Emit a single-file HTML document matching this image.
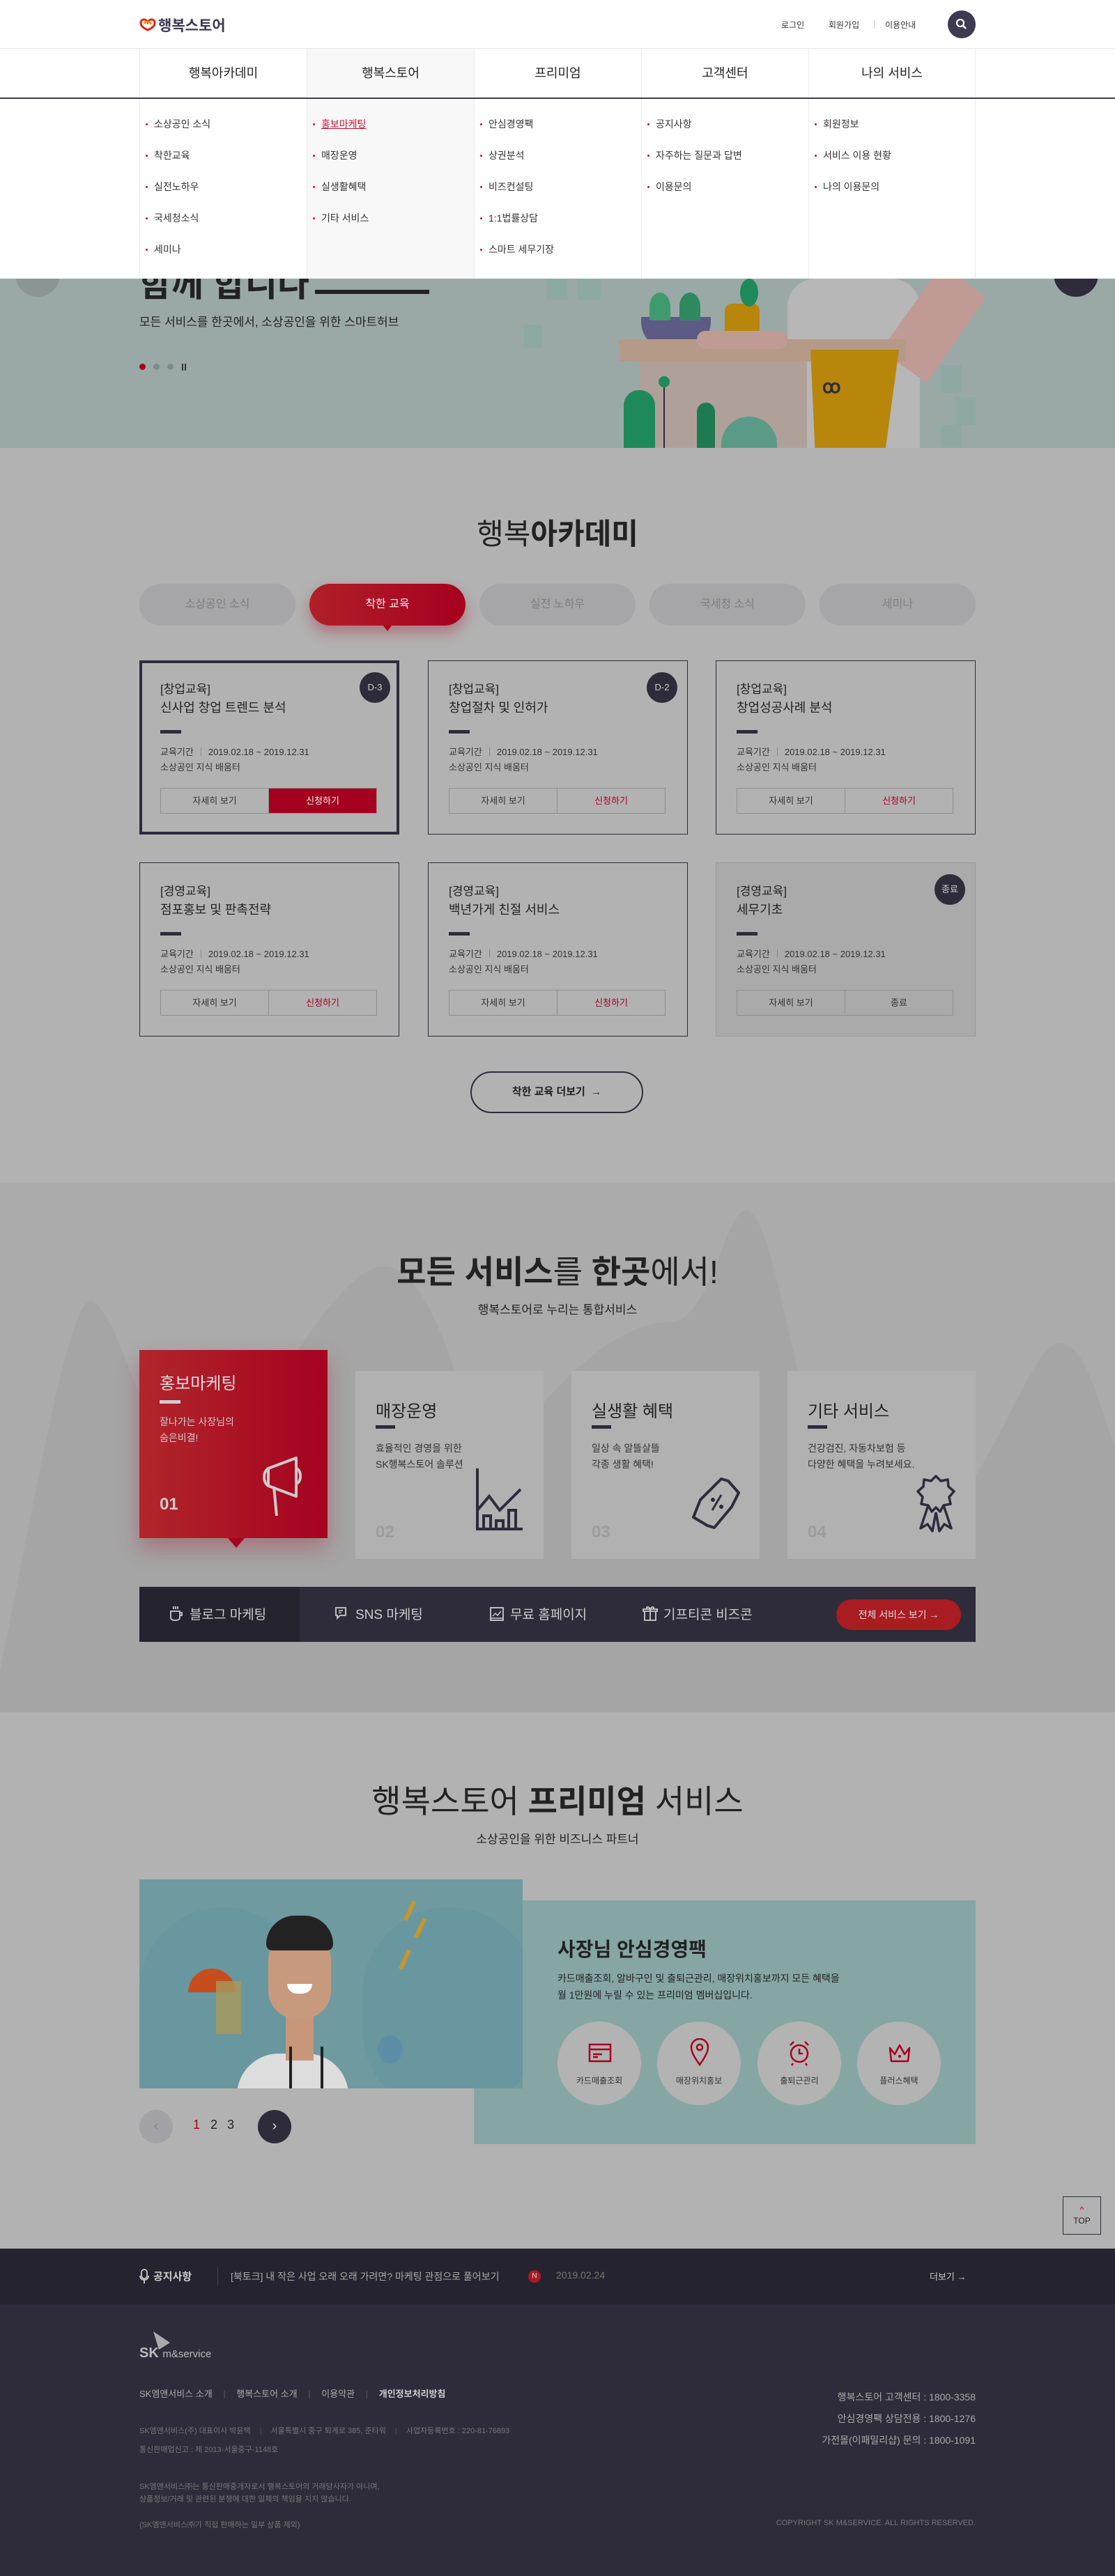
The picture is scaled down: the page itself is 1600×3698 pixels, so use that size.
<!DOCTYPE html>
<html lang="ko"><head><meta charset="utf-8">
<style>
*{margin:0;padding:0;box-sizing:border-box}
body{width:1600px;height:3698px;position:relative;overflow:hidden;background:#b2b2b2;font-family:"Liberation Sans","Noto Sans CJK KR",sans-serif;color:#333}
.a{position:absolute}
.t{position:absolute;white-space:nowrap}
.header{left:0;top:0;width:1600px;height:70px;background:#fff;border-bottom:1px solid #e5e5e5}
.nav{left:0;top:70px;width:1600px;height:72px;background:#fff;border-bottom:2px solid #3d3a52}
.drop{left:0;top:142px;width:1600px;height:258px;background:#fff;z-index:5}
.col{position:absolute;top:0;width:240px;height:100%;border-left:1px solid #ececec}
.navcol{position:absolute;top:0;width:240px;height:70px;border-left:1px solid #ececec;text-align:center;line-height:70px;font-size:18px;color:#222}
.item{position:absolute;left:20px;font-size:14px;color:#333;white-space:nowrap}
.item:before{content:"";position:absolute;left-12px;left:-12px;top:9px;width:3px;height:3px;border-radius:50%;background:#c8102e}
.hero{left:0;top:400px;width:1600px;height:243px;background:#9aa9a6;overflow:hidden}
.tab{position:absolute;top:838px;width:224px;height:60px;border-radius:30px;background:#a6a6a8;color:#7e7e82;font-size:16px;text-align:center;line-height:60px}
.card{position:absolute;width:373px;height:250px;border:1px solid #2e2b3b}
.card .c1{position:absolute;left:29px;top:26px;font-size:17px;color:#222}
.card .c2{position:absolute;left:29px;top:53px;font-size:18px;color:#222}
.card .dash{position:absolute;left:29px;top:99px;width:30px;height:5px;background:#2e2b3b}
.card .c3{position:absolute;left:29px;top:120px;font-size:13px;color:#333}
.card .c3 span{display:inline-block;border-left:1px solid #888;height:12px;margin:0 10px;vertical-align:-1px}
.card .c4{position:absolute;left:29px;top:142px;font-size:13px;color:#333}
.card .btns{position:absolute;left:29px;top:182px;width:311px;height:37px;border:1px solid #8e8e8e;display:flex}
.card .btns div{flex:1;text-align:center;line-height:35px;font-size:13px;color:#333}
.card .btns div+div{border-left:1px solid #8e8e8e;color:#a6001f}
.badge{position:absolute;right:14px;top:16px;width:44px;height:44px;border-radius:50%;background:#2e2b3b;color:#ccc;font-size:13px;text-align:center;line-height:44px}
.svc{position:absolute;top:1968px;width:270px;height:270px;background:#b1b1b1}
.svc .h{position:absolute;left:29px;top:38px;font-size:24px;color:#222}
.svc .d{position:absolute;left:29px;top:78px;width:28px;height:5px;background:#2e2b3b}
.svc .p{position:absolute;left:29px;top:100px;font-size:14px;line-height:23px;color:#333}
.svc .n{position:absolute;left:29px;top:218px;font-size:24px;font-weight:bold;color:#9c9c9c}
.circ{position:absolute;top:2902px;width:120px;height:120px;border-radius:50%;background:#b3b3b3;text-align:center}
.circ span{position:absolute;left:0;width:100%;top:76px;font-size:12px;color:#333}
.circ svg{position:absolute;left:44px;top:30px}
.bi{position:absolute;top:2303px;font-size:19px;color:#ccc;white-space:nowrap}
.bi svg{vertical-align:-4px;margin-right:8px}
</style></head><body>

<div class="a header">
  <svg class="a" style="left:200px;top:25px" width="24" height="20" viewBox="0 0 24 20"><path d="M12 7 C9 1 2 2 2 8 C2 13 7 16 12 18 C17 16 22 13 22 8 C22 2 15 1 12 7Z" fill="none" stroke="#e2231a" stroke-width="3"/><path d="M7 9 C9 5 15 5 17 10" fill="none" stroke="#f39800" stroke-width="3"/></svg>
  <div class="t" style="left:227px;top:21px;font-size:21px;font-weight:bold;color:#3d3a52">행복스토어</div>
  <div class="t" style="left:1121px;top:27px;font-size:12px;color:#333">로그인</div>
  <div class="t" style="left:1189px;top:27px;font-size:12px;color:#333">회원가입</div>
  <div class="a" style="left:1254px;top:29px;width:1px;height:12px;background:#ccc"></div>
  <div class="t" style="left:1270px;top:27px;font-size:12px;color:#333">이용안내</div>
  <div class="a" style="left:1360px;top:15px;width:40px;height:40px;border-radius:50%;background:#3d3a52"></div>
  <svg class="a" style="left:1370px;top:25px" width="20" height="20" viewBox="0 0 20 20"><circle cx="8" cy="8" r="5" fill="none" stroke="#fff" stroke-width="2.2"/><path d="M12 12 L16 16" stroke="#fff" stroke-width="2.5"/></svg>
</div>
<div class="a nav">
  <div class="navcol" style="left:200px">행복아카데미</div>
  <div class="navcol" style="left:440px;background:#f8f8f8">행복스토어</div>
  <div class="navcol" style="left:680px">프리미엄</div>
  <div class="navcol" style="left:920px">고객센터</div>
  <div class="navcol" style="left:1160px;border-right:1px solid #ececec">나의 서비스</div>
</div>

<div class="a hero">
  <div class="a" style="left:22px;top:-30px;width:64px;height:56px;border-radius:0 0 32px 32px;background:#8b9593"></div>
  <div class="a" style="left:1512px;top:-30px;width:64px;height:56px;border-radius:0 0 32px 32px;background:#2e2b3b"></div>
  <div class="t" style="left:200px;top:-32px;font-size:50px;font-weight:bold;color:#222">함께 합니다</div>
  <div class="a" style="left:452px;top:16px;width:164px;height:6px;background:#222"></div>
  <div class="t" style="left:200px;top:48px;font-size:17px;color:#222">모든 서비스를 한곳에서, 소상공인을 위한 스마트허브</div>
  <div class="a" style="left:200px;top:122px;width:9px;height:9px;border-radius:50%;background:#a6001f"></div>
  <div class="a" style="left:220px;top:122px;width:9px;height:9px;border-radius:50%;background:#7f8a88"></div>
  <div class="a" style="left:240px;top:122px;width:9px;height:9px;border-radius:50%;background:#7f8a88"></div>
  <div class="a" style="left:261px;top:122px;width:2px;height:10px;background:#333"></div>
  <div class="a" style="left:265px;top:122px;width:2px;height:10px;background:#333"></div>
  <div class="a" style="left:784px;top:0;width:30px;height:30px;background:#8ea9a4"></div>
  <div class="a" style="left:828px;top:0;width:34px;height:30px;background:#8ea9a4"></div>
  <div class="a" style="left:752px;top:66px;width:26px;height:34px;background:#8ea9a4"></div>
  <div class="a" style="left:1350px;top:124px;width:30px;height:40px;background:#8ea9a4"></div>
  <div class="a" style="left:1370px;top:170px;width:30px;height:40px;background:#8ea9a4"></div>
  <div class="a" style="left:1350px;top:210px;width:30px;height:33px;background:#8ea9a4"></div>
  <div class="a" style="left:1130px;top:0;width:190px;height:243px;background:#b7b7b7;border-radius:40px 40px 0 0"></div>
  <div class="a" style="left:1300px;top:-10px;width:80px;height:150px;background:#c09a94;transform:rotate(35deg)"></div>
  <div class="a" style="left:920px;top:55px;width:100px;height:47px;background:#5d5a85;border-radius:0 0 40px 40px"></div>
  <div class="a" style="left:932px;top:20px;width:30px;height:40px;background:#3f9b6e;border-radius:50% 50% 0 0"></div>
  <div class="a" style="left:975px;top:20px;width:30px;height:40px;background:#2e8a5e;border-radius:50% 50% 0 0"></div>
  <div class="a" style="left:1040px;top:36px;width:50px;height:60px;background:#b8860b;border-radius:10px 10px 20px 20px"></div>
  <div class="a" style="left:1062px;top:0;width:26px;height:40px;background:#1e8a5a;border-radius:50%"></div>
  <div class="a" style="left:888px;top:87px;width:412px;height:32px;background:#b59a88"></div>
  <div class="a" style="left:918px;top:119px;width:240px;height:124px;background:#b0a09a"></div>
  <div class="a" style="left:1000px;top:75px;width:130px;height:26px;background:#c09a94;border-radius:12px"></div>
  <div class="a" style="left:1163px;top:102px;width:127px;height:141px;background:#b8860b;clip-path:polygon(0 0,100% 0,85% 100%,5% 100%)"></div>
  <div class="t" style="left:1180px;top:140px;font-size:26px;font-weight:bold;color:#2e2b3b">ꝏ</div>
  <div class="a" style="left:895px;top:160px;width:45px;height:83px;background:#1e8a5a;border-radius:22px 22px 0 0"></div>
  <div class="a" style="left:945px;top:140px;width:16px;height:16px;background:#1e8a5a;border-radius:50%"></div>
  <div class="a" style="left:952px;top:156px;width:2px;height:87px;background:#2e2b3b"></div>
  <div class="a" style="left:1000px;top:178px;width:26px;height:65px;background:#1e7a50;border-radius:13px 13px 0 0"></div>
  <div class="a" style="left:1035px;top:198px;width:80px;height:45px;background:#5a9a86;border-radius:40px 40px 0 0"></div>
</div>

<div class="a drop">
  <div class="col" style="left:200px">
    <div class="item" style="top:26px">소상공인 소식</div>
    <div class="item" style="top:71px">착한교육</div>
    <div class="item" style="top:116px">실전노하우</div>
    <div class="item" style="top:161px">국세청소식</div>
    <div class="item" style="top:206px">세미나</div>
  </div>
  <div class="col" style="left:440px;background:#f8f8f8">
    <div class="item" style="top:26px;color:#c8102e;text-decoration:underline">홍보마케팅</div>
    <div class="item" style="top:71px">매장운영</div>
    <div class="item" style="top:116px">실생활혜택</div>
    <div class="item" style="top:161px">기타 서비스</div>
  </div>
  <div class="col" style="left:680px">
    <div class="item" style="top:26px">안심경영팩</div>
    <div class="item" style="top:71px">상권분석</div>
    <div class="item" style="top:116px">비즈컨설팅</div>
    <div class="item" style="top:161px">1:1법률상담</div>
    <div class="item" style="top:206px">스마트 세무기장</div>
  </div>
  <div class="col" style="left:920px">
    <div class="item" style="top:26px">공지사항</div>
    <div class="item" style="top:71px">자주하는 질문과 답변</div>
    <div class="item" style="top:116px">이용문의</div>
  </div>
  <div class="col" style="left:1160px;border-right:1px solid #ececec">
    <div class="item" style="top:26px">회원정보</div>
    <div class="item" style="top:71px">서비스 이용 현황</div>
    <div class="item" style="top:116px">나의 이용문의</div>
  </div>
</div>

<div class="a" style="left:0;top:643px;width:1600px;height:1055px;background:#b2b2b2"></div>
<div class="t" style="left:0;width:1600px;text-align:center;top:733px;font-size:42px;color:#222">행복<b>아카데미</b></div>
<div class="tab" style="left:200px">소상공인 소식</div>
<div class="tab" style="left:444px;background:linear-gradient(90deg,#b02028,#a6001f);color:#eee;box-shadow:0 10px 20px rgba(166,0,31,.35)">착한 교육</div>
<div class="a" style="left:550px;top:898px;width:0;height:0;border-left:6px solid transparent;border-right:6px solid transparent;border-top:8px solid #a6001f"></div>
<div class="tab" style="left:688px">실전 노하우</div>
<div class="tab" style="left:932px">국세청 소식</div>
<div class="tab" style="left:1176px">세미나</div>

<div class="card" style="left:200px;top:948px;border:4px solid #2e2b3b">
  <div style="position:absolute;left:-3px;top:-3px;width:373px;height:250px">
  <div class="c1">[창업교육]</div><div class="c2">신사업 창업 트렌드 분석</div><div class="dash"></div>
  <div class="c3">교육기간<span></span>2019.02.18 ~ 2019.12.31</div><div class="c4">소상공인 지식 배움터</div>
  <div class="btns"><div>자세히 보기</div><div style="background:#a6001f;color:#eee">신청하기</div></div>
  <div class="badge">D-3</div></div>
</div>
<div class="card" style="left:614px;top:948px">
  <div class="c1">[창업교육]</div><div class="c2">창업절차 및 인허가</div><div class="dash"></div>
  <div class="c3">교육기간<span></span>2019.02.18 ~ 2019.12.31</div><div class="c4">소상공인 지식 배움터</div>
  <div class="btns"><div>자세히 보기</div><div>신청하기</div></div>
  <div class="badge">D-2</div>
</div>
<div class="card" style="left:1027px;top:948px">
  <div class="c1">[창업교육]</div><div class="c2">창업성공사례 분석</div><div class="dash"></div>
  <div class="c3">교육기간<span></span>2019.02.18 ~ 2019.12.31</div><div class="c4">소상공인 지식 배움터</div>
  <div class="btns"><div>자세히 보기</div><div>신청하기</div></div>
</div>
<div class="card" style="left:200px;top:1238px">
  <div class="c1">[경영교육]</div><div class="c2">점포홍보 및 판촉전략</div><div class="dash"></div>
  <div class="c3">교육기간<span></span>2019.02.18 ~ 2019.12.31</div><div class="c4">소상공인 지식 배움터</div>
  <div class="btns"><div>자세히 보기</div><div>신청하기</div></div>
</div>
<div class="card" style="left:614px;top:1238px">
  <div class="c1">[경영교육]</div><div class="c2">백년가게 친절 서비스</div><div class="dash"></div>
  <div class="c3">교육기간<span></span>2019.02.18 ~ 2019.12.31</div><div class="c4">소상공인 지식 배움터</div>
  <div class="btns"><div>자세히 보기</div><div>신청하기</div></div>
</div>
<div class="card" style="left:1027px;top:1238px;background:#aaaaaa;border-color:#999">
  <div class="c1">[경영교육]</div><div class="c2">세무기초</div><div class="dash"></div>
  <div class="c3">교육기간<span></span>2019.02.18 ~ 2019.12.31</div><div class="c4">소상공인 지식 배움터</div>
  <div class="btns"><div>자세히 보기</div><div style="color:#333">종료</div></div>
  <div class="badge">종료</div>
</div>
<div class="a" style="left:675px;top:1538px;width:248px;height:60px;border:2px solid #2e2b3b;border-radius:30px;text-align:center;line-height:56px;font-size:15px;font-weight:bold;color:#222">착한 교육 더보기 &nbsp;→</div>

<div class="a" style="left:0;top:1698px;width:1600px;height:760px;background:#ababab;overflow:hidden">
  <svg width="1600" height="760" style="position:absolute;left:0;top:0"><path d="M0 700 C60 400 100 170 130 170 C170 170 230 450 300 480 C360 350 480 120 550 120 C620 120 660 300 700 420 C780 300 880 200 960 200 C1020 200 1040 40 1070 40 C1110 40 1140 300 1180 400 C1240 450 1300 520 1350 480 C1420 430 1480 230 1520 230 C1560 230 1580 330 1600 380 L1600 760 L0 760Z" fill="#a5a5a5"/></svg>
</div>
<div class="t" style="left:0;width:1600px;text-align:center;top:1790px;font-size:46px;color:#222"><b>모든 서비스</b>를 <b>한곳</b>에서!</div>
<div class="t" style="left:0;width:1600px;text-align:center;top:1866px;font-size:17px;color:#222">행복스토어로 누리는 통합서비스</div>

<div class="a" style="left:200px;top:1938px;width:270px;height:270px;background:linear-gradient(90deg,#b0262b,#a6021f);box-shadow:0 15px 30px rgba(166,0,31,.3)">
  <div class="t" style="left:29px;top:28px;font-size:24px;color:#ddd">홍보마케팅</div>
  <div class="a" style="left:29px;top:72px;width:30px;height:5px;background:#ccc"></div>
  <div class="t" style="left:29px;top:92px;font-size:14px;line-height:23px;color:#ccc">잘나가는 사장님의<br>숨은비결!</div>
  <div class="t" style="left:29px;top:208px;font-size:24px;font-weight:bold;color:#ccc">01</div>
  <svg class="a" style="left:175px;top:150px" width="70" height="90" viewBox="0 0 70 90"><path d="M10 20 L50 5 L50 60 L10 45 Z M10 20 C2 25 2 40 10 45 M50 20 C58 22 58 40 50 42 M18 46 L22 88" fill="none" stroke="#ccc" stroke-width="4" stroke-linejoin="round"/></svg>
</div>
<div class="a" style="left:327px;top:2208px;width:0;height:0;border-left:12px solid transparent;border-right:12px solid transparent;border-top:14px solid #a6021f"></div>
<div class="svc" style="left:510px"><div class="h">매장운영</div><div class="d"></div><div class="p">효율적인 경영을 위한<br>SK행복스토어 솔루션</div><div class="n">02</div>
  <svg class="a" style="left:172px;top:140px" width="70" height="90" viewBox="0 0 70 90"><path d="M3 0 V87 H68 M3 60 L20 40 L35 60 L65 30 M12 87 V68 H22 V87 M30 87 V75 H40 V87 M48 87 V60 H58 V87" fill="none" stroke="#2e2b3b" stroke-width="4"/></svg></div>
<div class="svc" style="left:820px"><div class="h">실생활 혜택</div><div class="d"></div><div class="p">일상 속 알뜰살뜰<br>각종 생활 혜택!</div><div class="n">03</div>
  <svg class="a" style="left:170px;top:150px" width="75" height="80" viewBox="0 0 75 80"><path d="M45 5 L55 8 L70 25 L60 45 L35 75 L25 72 L5 60 L15 35 Z" fill="none" stroke="#2e2b3b" stroke-width="4" stroke-linejoin="round"/><path d="M32 50 L45 28" stroke="#2e2b3b" stroke-width="3"/><circle cx="33" cy="35" r="3" fill="#2e2b3b"/><circle cx="45" cy="45" r="3" fill="#2e2b3b"/></svg></div>
<div class="svc" style="left:1130px"><div class="h">기타 서비스</div><div class="d"></div><div class="p">건강검진, 자동차보험 등<br>다양한 혜택을 누려보세요.</div><div class="n">04</div>
  <svg class="a" style="left:183px;top:148px" width="60" height="85" viewBox="0 0 60 85"><path d="M30 3 L37 10 L47 8 L48 18 L56 25 L49 33 L51 43 L41 45 L36 54 L30 48 L24 54 L19 45 L9 43 L11 33 L4 25 L12 18 L13 8 L23 10 Z M19 45 L8 78 L18 72 L25 82 L30 55 M41 45 L52 78 L42 72 L35 82 L30 55" fill="none" stroke="#2e2b3b" stroke-width="3.5" stroke-linejoin="round"/></svg></div>

<div class="a" style="left:200px;top:2278px;width:1200px;height:79px;background:#2e2b3b"></div>
<div class="a" style="left:200px;top:2278px;width:230px;height:79px;background:#25232f"></div>
<div class="bi" style="left:242px"><svg width="22" height="24" viewBox="0 0 22 24"><path d="M3 9 H16 V18 C16 21 13 22 9.5 22 C6 22 3 21 3 18 Z M16 11 H19 V15 H16 M7 2 V6 M10 2 V6 M13 2 V6" fill="none" stroke="#ccc" stroke-width="1.8"/></svg>블로그 마케팅</div>
<div class="bi" style="left:478px"><svg width="24" height="24" viewBox="0 0 24 24"><path d="M4 4 H18 V15 H10 L6 19 V15 H4 Z" fill="none" stroke="#ccc" stroke-width="1.8"/><path d="M8 8 H14 M8 11 H12" stroke="#ccc" stroke-width="1.5"/></svg>SNS 마케팅</div>
<div class="bi" style="left:702px"><svg width="22" height="22" viewBox="0 0 22 22"><rect x="2" y="2" width="18" height="18" fill="none" stroke="#ccc" stroke-width="1.8"/><path d="M5 14 L9 10 L12 13 L17 7 M2 17 H20" fill="none" stroke="#ccc" stroke-width="1.5"/></svg>무료 홈페이지</div>
<div class="bi" style="left:922px"><svg width="22" height="24" viewBox="0 0 22 24"><path d="M3 9 H19 V22 H3 Z M1 6 H21 V9 H1 Z M11 6 V22 M11 6 C8 1 4 3 7 6 M11 6 C14 1 18 3 15 6" fill="none" stroke="#ccc" stroke-width="1.8"/></svg>기프티콘 비즈콘</div>
<div class="a" style="left:1200px;top:2296px;width:179px;height:44px;border-radius:22px;background:#a81c22;color:#ddd;font-size:14px;text-align:center;line-height:44px">전체 서비스 보기 →</div>

<div class="t" style="left:0;width:1600px;text-align:center;top:2550px;font-size:46px;color:#222">행복스토어 <b>프리미엄</b> 서비스</div>
<div class="t" style="left:0;width:1600px;text-align:center;top:2626px;font-size:17px;color:#222">소상공인을 위한 비즈니스 파트너</div>
<div class="a" style="left:680px;top:2728px;width:720px;height:350px;background:#86a6a3"></div>
<div class="a" style="left:200px;top:2698px;width:550px;height:300px;background:#6f9a9f;overflow:hidden">
  <div class="a" style="left:0;top:40px;width:240px;height:260px;background:#6997a0;border-radius:120px 120px 0 0"></div>
  <div class="a" style="left:320px;top:40px;width:250px;height:300px;background:#6997a0;border-radius:125px"></div>
  <div class="a" style="left:70px;top:128px;width:68px;height:34px;background:#c84d1e;border-radius:34px 34px 0 0"></div>
  <div class="a" style="left:110px;top:146px;width:36px;height:76px;background:#a89a5a;opacity:.8"></div>
  <div class="a" style="left:140px;top:250px;width:160px;height:60px;background:#ddd;border-radius:60px 60px 0 0"></div>
  <div class="a" style="left:210px;top:190px;width:40px;height:70px;background:#c8977a"></div>
  <div class="a" style="left:185px;top:70px;width:90px;height:130px;background:#c79a7e;border-radius:45px 45px 40px 40px"></div>
  <div class="a" style="left:182px;top:52px;width:96px;height:50px;background:#222;border-radius:48px 48px 10px 10px"></div>
  <div class="a" style="left:212px;top:150px;width:36px;height:14px;background:#fff;border-radius:0 0 18px 18px"></div>
  <div class="a" style="left:215px;top:240px;width:4px;height:60px;background:#222"></div>
  <div class="a" style="left:260px;top:240px;width:4px;height:60px;background:#222"></div>
  <div class="a" style="left:342px;top:224px;width:36px;height:40px;background:#5d8ea8;border-radius:50%"></div>
  <div class="a" style="left:385px;top:30px;width:6px;height:30px;background:#c8962a;transform:rotate(25deg)"></div>
  <div class="a" style="left:400px;top:55px;width:6px;height:30px;background:#c8962a;transform:rotate(25deg)"></div>
  <div class="a" style="left:378px;top:100px;width:6px;height:30px;background:#c8962a;transform:rotate(25deg)"></div>
</div>
<div class="t" style="left:800px;top:2777px;font-size:28px;font-weight:bold;color:#222">사장님 안심경영팩</div>
<div class="t" style="left:800px;top:2828px;font-size:14px;line-height:24px;color:#222">카드매출조회, 알바구인 및 출퇴근관리, 매장위치홍보까지 모든 혜택을<br>월 1만원에 누릴 수 있는 프리미엄 멤버십입니다.</div>
<div class="circ" style="left:800px"><svg width="34" height="30" viewBox="0 0 34 30"><rect x="2" y="3" width="30" height="24" fill="none" stroke="#a6001f" stroke-width="2.5"/><path d="M2 10 H32 M7 17 H20 M7 21 H14" stroke="#a6001f" stroke-width="2.5"/></svg><span>카드매출조회</span></div>
<div class="circ" style="left:943px"><svg width="30" height="40" viewBox="0 0 30 40" style="left:46px;top:24px"><path d="M15 38 C5 24 3 18 3 13 A12 12 0 0 1 27 13 C27 18 25 24 15 38Z" fill="none" stroke="#a6001f" stroke-width="2.5"/><circle cx="15" cy="13" r="4" fill="none" stroke="#a6001f" stroke-width="2.5"/></svg><span>매장위치홍보</span></div>
<div class="circ" style="left:1087px"><svg width="34" height="38" viewBox="0 0 34 38" style="left:43px;top:26px"><circle cx="17" cy="20" r="12" fill="none" stroke="#a6001f" stroke-width="2.5"/><path d="M17 13 V20 H22 M4 8 L9 3 M30 8 L25 3 M8 34 L6 37 M26 34 L28 37" stroke="#a6001f" stroke-width="2.5" fill="none"/></svg><span>출퇴근관리</span></div>
<div class="circ" style="left:1230px"><svg width="34" height="30" viewBox="0 0 34 30"><path d="M3 8 L10 17 L17 4 L24 17 L31 8 L29 27 H5 Z" fill="none" stroke="#a6001f" stroke-width="2.5" stroke-linejoin="round"/><circle cx="17" cy="20" r="2" fill="#a6001f"/></svg><span>플러스혜택</span></div>
<div class="a" style="left:200px;top:3029px;width:48px;height:48px;border-radius:50%;background:#a3a3a7;color:#888;text-align:center;line-height:46px;font-size:20px">‹</div>
<div class="t" style="left:277px;top:3040px;font-size:18px;color:#a6001f">1</div>
<div class="t" style="left:302px;top:3040px;font-size:18px;color:#222">2</div>
<div class="t" style="left:326px;top:3040px;font-size:18px;color:#222">3</div>
<div class="a" style="left:370px;top:3029px;width:48px;height:48px;border-radius:50%;background:#2e2b3b;color:#ddd;text-align:center;line-height:46px;font-size:20px">›</div>
<div class="a" style="left:1525px;top:3153px;width:55px;height:55px;border:1px solid #2e2b3b;text-align:center;font-size:12px;color:#222;padding-top:10px;line-height:16px"><span style="color:#a6001f">^</span><br>TOP</div>

<div class="a" style="left:0;top:3228px;width:1600px;height:80px;background:#25232f"></div>
<svg class="a" style="left:200px;top:3257px" width="14" height="22" viewBox="0 0 14 22"><rect x="3" y="1" width="8" height="13" rx="4" fill="none" stroke="#ccc" stroke-width="1.8"/><path d="M1 10 C1 18 13 18 13 10 M7 16 V21" fill="none" stroke="#ccc" stroke-width="1.8"/></svg>
<div class="t" style="left:220px;top:3257px;font-size:15px;font-weight:bold;color:#ccc">공지사항</div>
<div class="a" style="left:312px;top:3255px;width:1px;height:26px;background:#444"></div>
<div class="t" style="left:331px;top:3258px;font-size:14px;color:#aaa">[북토크] 내 작은 사업 오래 오래 가려면? 마케팅 관점으로 풀어보기</div>
<div class="a" style="left:758px;top:3259px;width:18px;height:18px;border-radius:50%;background:#a81c22;color:#ddd;font-size:10px;text-align:center;line-height:18px">N</div>
<div class="t" style="left:798px;top:3258px;font-size:14px;color:#777">2019.02.24</div>
<div class="t" style="left:1334px;top:3258px;font-size:13px;color:#ccc">더보기 →</div>

<div class="a" style="left:0;top:3308px;width:1600px;height:390px;background:#2e2b3b"></div>
<svg class="a" style="left:218px;top:3347px" width="30" height="28" viewBox="0 0 30 28"><path d="M2 0 L26 16 L10 26 Z" fill="#aaa"/></svg>
<div class="t" style="left:200px;top:3367px;font-size:20px;font-weight:bold;color:#bbb">SK <span style="font-size:15px;font-weight:normal">m&amp;service</span></div>
<div class="t" style="left:200px;top:3426px;font-size:13px;color:#aaa">SK엠앤서비스 소개 <span style="color:#555;margin:0 12px">|</span> 행복스토어 소개 <span style="color:#555;margin:0 12px">|</span> 이용약관 <span style="color:#555;margin:0 12px">|</span> <b style="color:#ccc">개인정보처리방침</b></div>
<div class="t" style="left:200px;top:3481px;font-size:11px;color:#777">SK엠앤서비스(주) 대표이사 박윤택 <span style="color:#555;margin:0 10px">|</span> 서울특별시 중구 퇴계로 385, 준타워 <span style="color:#555;margin:0 10px">|</span> 사업자등록번호 : 220-81-76893</div>
<div class="t" style="left:200px;top:3508px;font-size:11px;color:#777">통신판매업신고 : 제 2013-서울중구-1148호</div>
<div class="t" style="left:200px;top:3561px;font-size:11px;line-height:18px;color:#777">SK엠앤서비스㈜는 통신판매중개자로서 행복스토어의 거래당사자가 아니며,<br>상품정보/거래 및 관련된 분쟁에 대한 일체의 책임을 지지 않습니다.</div>
<div class="t" style="left:200px;top:3616px;font-size:11px;color:#777">(SK엠앤서비스㈜가 직접 판매하는 일부 상품 제외)</div>
<div class="t" style="right:200px;top:3426px;font-size:14px;color:#aaa;text-align:right;line-height:31px">행복스토어 고객센터 : 1800-3358<br>안심경영팩 상담전용 : 1800-1276<br>가전몰(이패밀리샵) 문의 : 1800-1091</div>
<div class="t" style="right:200px;top:3616px;font-size:11px;color:#777">COPYRIGHT SK M&amp;SERVICE. ALL RIGHTS RESERVED.</div>
</body></html>
